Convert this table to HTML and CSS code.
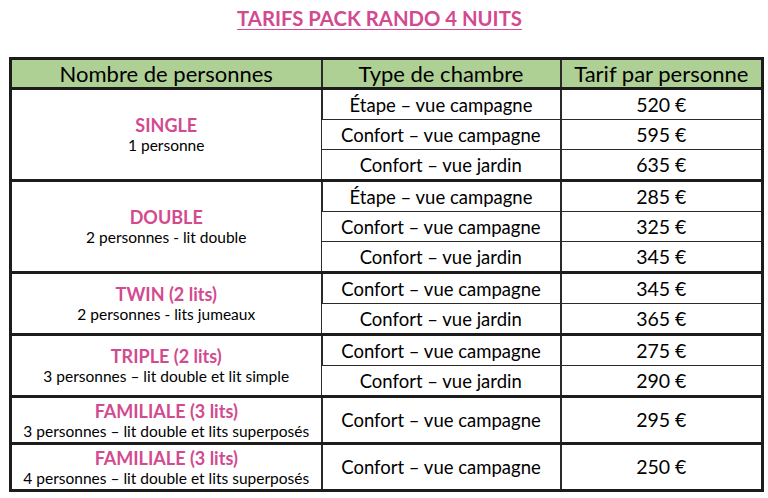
FILE: index.html
```html
<!DOCTYPE html>
<html lang="fr">
<head>
<meta charset="utf-8">
<title>Tarifs pack rando 4 nuits</title>
<link rel="stylesheet" href="styles.css">
</head>
<body>
<h1 class="title">TARIFS PACK RANDO 4 NUITS</h1>
<table class="pricing">
  <colgroup>
    <col class="c1"><col class="c2"><col class="c3">
  </colgroup>
  <thead>
    <tr class="head"><th>Nombre de personnes</th><th>Type de chambre</th><th>Tarif par personne</th></tr>
  </thead>
  <tbody class="group">
    <tr><td rowspan="3" class="who"><span class="cat">SINGLE</span><span class="sub">1 personne</span></td><td>Étape – vue campagne</td><td class="price">520 €</td></tr>
    <tr><td>Confort – vue campagne</td><td class="price">595 €</td></tr>
    <tr><td>Confort – vue jardin</td><td class="price">635 €</td></tr>
  </tbody>
  <tbody class="group">
    <tr><td rowspan="3" class="who"><span class="cat">DOUBLE</span><span class="sub">2 personnes - lit double</span></td><td>Étape – vue campagne</td><td class="price">285 €</td></tr>
    <tr><td>Confort – vue campagne</td><td class="price">325 €</td></tr>
    <tr><td>Confort – vue jardin</td><td class="price">345 €</td></tr>
  </tbody>
  <tbody class="group">
    <tr><td rowspan="2" class="who"><span class="cat">TWIN (2 lits)</span><span class="sub">2 personnes - lits jumeaux</span></td><td>Confort – vue campagne</td><td class="price">345 €</td></tr>
    <tr><td>Confort – vue jardin</td><td class="price">365 €</td></tr>
  </tbody>
  <tbody class="group">
    <tr><td rowspan="2" class="who"><span class="cat">TRIPLE (2 lits)</span><span class="sub">3 personnes – lit double et lit simple</span></td><td>Confort – vue campagne</td><td class="price">275 €</td></tr>
    <tr><td>Confort – vue jardin</td><td class="price">290 €</td></tr>
  </tbody>
  <tbody class="group">
    <tr class="tall"><td class="who"><span class="cat">FAMILIALE (3 lits)</span><span class="sub">3 personnes – lit double et lits superposés</span></td><td>Confort – vue campagne</td><td class="price">295 €</td></tr>
  </tbody>
  <tbody class="group">
    <tr class="tall"><td class="who"><span class="cat">FAMILIALE (3 lits)</span><span class="sub">4 personnes – lit double et lits superposés</span></td><td>Confort – vue campagne</td><td class="price">250 €</td></tr>
  </tbody>
</table>
</body>
</html>
```
FILE: styles.css
```css
html, body {
  margin: 0;
  padding: 0;
  background: #ffffff;
}

body {
  font-family: Lato, "Open Sans", "Liberation Sans", sans-serif;
  color: #000000;
}

.title {
  margin: 0 9px 0 0;
  padding-top: 6px;
  height: 50px;
  box-sizing: border-box;
  text-align: center;
  font-size: 20.3px;
  font-weight: 700;
  line-height: 24px;
  color: #d24a8f;
  text-decoration: underline;
  text-decoration-thickness: 1px;
  text-underline-offset: 3px;
}

.pricing {
  margin: 7px 0 0 9px;
  width: 752px;
  table-layout: fixed;
  border-collapse: collapse;
  border: 3px solid #1c1c1c;
}

.c1 { width: 311px; }
.c2 { width: 239px; }
.c3 { width: 202px; }

.pricing th,
.pricing td {
  padding: 0;
  text-align: center;
  vertical-align: middle;
  border: 1px solid #2a2a2a;
  line-height: 22px;
}

.pricing th {
  background: #afd095;
  font-weight: 400;
  font-size: 22px;
  height: 27px;
  border-left: 2px solid #2a2a2a;
  border-right: 2px solid #2a2a2a;
}

.pricing td {
  font-size: 18.5px;
  height: 29px;
}

.pricing td.price {
  font-size: 19.5px;
}

.pricing td + td {
  border-left: 2px solid #2a2a2a;
}

.pricing .group {
  border-top: 3px solid #1c1c1c;
}

.pricing .tall td {
  height: 44px;
}

.pricing td.who {
  line-height: 19px;
}

.cat {
  display: block;
  font-weight: 700;
  font-size: 18px;
  line-height: 21px;
  color: #d24a8f;
}

.sub {
  display: block;
  font-size: 15.5px;
  line-height: 18px;
}
```
